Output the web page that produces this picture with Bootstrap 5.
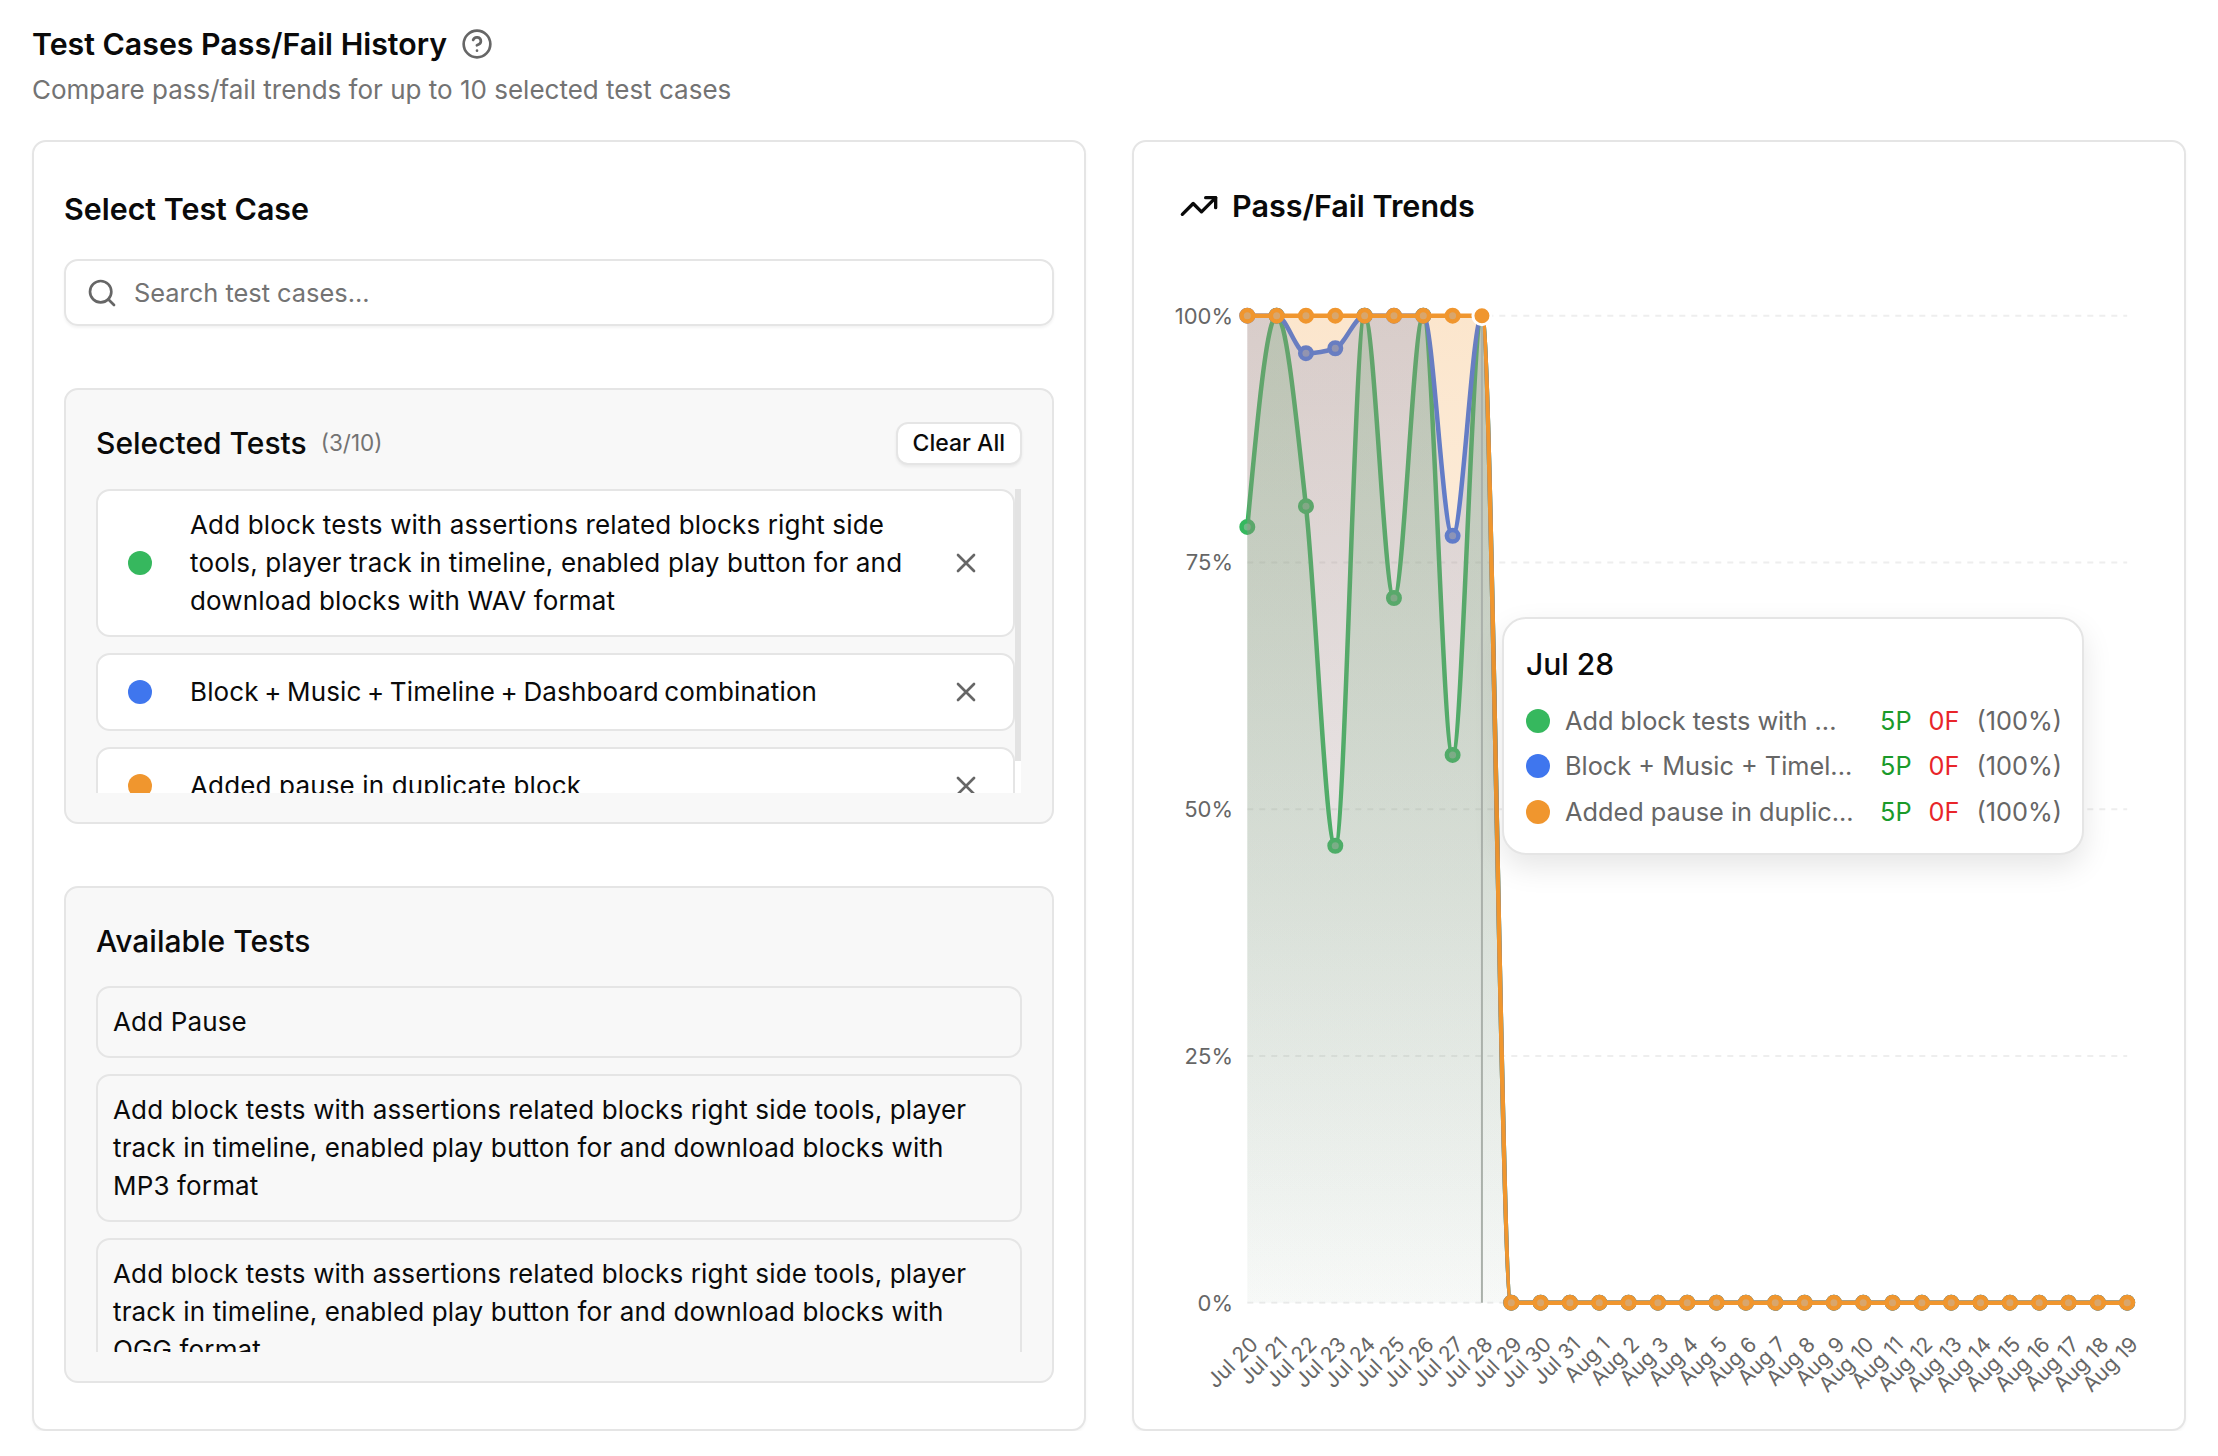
<!DOCTYPE html>
<html lang="en">
<head>
  <meta charset="UTF-8">
  <meta name="viewport" content="width=device-width, initial-scale=1">
  <title>Test Cases Pass/Fail History</title>
  <link href="https://cdn.jsdelivr.net/npm/bootstrap@5.3.0/dist/css/bootstrap.min.css" rel="stylesheet">
  <style>
    body { font-family: Inter, "Liberation Sans", sans-serif; color: #0a0a0a; background: #fff; }
    .page-wrap { padding: 22px 32px 0; }
    .page-title { font-size: 30.3px; line-height: 44px; font-weight: 600; margin: 0; }
    .page-sub { font-size: 26px; line-height: 36px; color: #737373; margin: 6px 0 0; }
    .help-ico { width: 32px; height: 32px; margin-left: 14px; color: #666; }
    .cols { --bs-gutter-x: 46px; margin-top: 32px; }
    .box { border: 2px solid #e5e5e5; border-radius: 14px; height: 1291px; box-shadow: 0 2px 3px rgba(0,0,0,.04); background: #fff; }
    .box-left { padding: 47px 30px 0; }
    .box-title { font-size: 30.4px; line-height: 40px; font-weight: 600; margin: 0 0 30px; }
    .search-box { height: 67px; border: 2px solid #e5e5e5; border-radius: 14px; padding: 0 20px; margin-bottom: 62px; box-shadow: 0 2px 3px rgba(0,0,0,.05); }
    .search-box input { border: 0; outline: 0; padding: 2px 0 0; background: transparent; font-size: 25.4px; width: 100%; color: #0a0a0a; }
    .search-box input::placeholder { color: #737373; opacity: 1; }
    .panel-box { background: #f8f8f8; border: 2px solid #e5e5e5; border-radius: 14px; padding: 31px 30px 29px; }
    .panel-title { font-size: 30px; line-height: 44px; font-weight: 500; margin: 0; }
    .panel-count { font-size: 22.5px; color: #737373; margin-left: 14px; }
    .clear-btn { --bs-btn-font-size: 23px; --bs-btn-padding-x: 15px; --bs-btn-padding-y: 0; --bs-btn-bg: #fff; --bs-btn-border-color: #e5e5e5; --bs-btn-border-width: 2px; --bs-btn-border-radius: 12px; --bs-btn-font-weight: 500; --bs-btn-color: #0a0a0a; height: 43px; box-shadow: 0 2px 3px rgba(0,0,0,.06); }
    .sel-scroll { height: 304px; margin-top: 24px; }
    .sel-list { width: 919px; overflow: hidden; }
    .scroll-track { width: 6px; background: #fff; }
    .scroll-thumb { height: 272px; background: #e3e3e3; }
    .test-item { border: 2px solid #e5e5e5; border-radius: 14px; padding: 15px 25px 15px 30px; margin-bottom: 16px; font-size: 26px; line-height: 38px; letter-spacing: .15px; }
    .test-item.sel { background: #fff; }
    .test-item.avail { padding: 15px 24px 15px 15px; }
    .color-dot { flex: 0 0 24px; width: 24px; height: 24px; border-radius: 50%; }
    .sel-text { flex: 1 1 0; margin: 0 6px 0 38px; min-width: 0; }
    .sel-tight { word-spacing: -2px; }
    .x-btn { flex: 0 0 44px; width: 44px; height: 44px; color: #666; }
    .avail-title { margin-bottom: 23px; }
    .avail-scroll { height: 366px; overflow: hidden; }
    .box-right { position: relative; padding-top: 0; }
    .trend-head { padding: 44px 0 0 45px; height: 118px; font-size: 30.5px; line-height: 40px; font-weight: 600; }
    .trend-head svg { margin-right: 13px; width: 40px; height: 40px; }
    .chart-svg { display: block; }
    .chart-svg text { font-family: Inter, "Liberation Sans", sans-serif; font-size: 22px; fill: #666; }
    .chart-svg text.tick-x { font-size: 21px; }
    .tip-box { position: absolute; left: 368px; top: 475px; width: 582px; height: 238px; background: #fff; border: 2px solid #e5e5e5; border-radius: 24px; box-shadow: 0 12px 30px rgba(0,0,0,.1); padding: 25px 20px 0 22px; }
    .tip-date { font-size: 30px; line-height: 40px; font-weight: 500; margin-bottom: 14px; }
    .tip-row { font-size: 25.3px; line-height: 36px; height: 45.5px; color: #666; }
    .tip-name { flex: 1 1 0; margin-left: 15px; white-space: nowrap; }
    .tip-num { margin-left: 17px; }
    .tip-pass { color: #1a9a2a; }
    .tip-fail { color: #e8252a; }
  </style>
</head>
<body>

<div class="page-wrap">
  <div class="d-flex align-items-center">
    <h1 class="page-title">Test Cases Pass/Fail History</h1>
    <svg class="help-ico" viewBox="0 0 24 24" fill="none" stroke="currentColor" stroke-width="2" stroke-linecap="round" stroke-linejoin="round"><circle cx="12" cy="12" r="10"/><path d="M9.09 9a3 3 0 0 1 5.83 1c0 2-3 3-3 3"/><path d="M12 17h.01"/></svg>
  </div>
  <p class="page-sub">Compare pass/fail trends for up to 10 selected test cases</p>

  <div class="row cols">
    <div class="col-6">
      <div class="box box-left">
        <h2 class="box-title">Select Test Case</h2>
        <div class="search-box d-flex align-items-center gap-3">
          <svg width="32" height="32" class="flex-shrink-0" viewBox="0 0 24 24" fill="none" stroke="#666" stroke-width="2" stroke-linecap="round" stroke-linejoin="round"><circle cx="11" cy="11" r="8"/><path d="m21 21-4.3-4.3"/></svg>
          <input type="text" placeholder="Search test cases...">
        </div>

        <div class="panel-box mb-0">
          <div class="d-flex align-items-center justify-content-between">
            <div class="d-flex align-items-center">
              <h3 class="panel-title">Selected Tests</h3>
              <span class="panel-count">(3/10)</span>
            </div>
            <button type="button" class="btn clear-btn">Clear All</button>
          </div>
          <div class="sel-scroll d-flex">
            <div class="sel-list">
              <div class="test-item sel d-flex align-items-center">
                <span class="color-dot" style="background:#36b85e"></span>
                <span class="sel-text">Add block tests with assertions related blocks right side tools, player track in timeline, enabled play button for and download blocks with WAV format</span>
                <span class="x-btn d-flex align-items-center justify-content-center"><svg width="32" height="32" viewBox="0 0 24 24" fill="none" stroke="currentColor" stroke-width="2" stroke-linecap="round"><path d="M18 6 6 18M6 6l12 12"/></svg></span>
              </div>
              <div class="test-item sel d-flex align-items-center">
                <span class="color-dot" style="background:#3f76ee"></span>
                <span class="sel-text sel-tight">Block + Music + Timeline + Dashboard combination</span>
                <span class="x-btn d-flex align-items-center justify-content-center"><svg width="32" height="32" viewBox="0 0 24 24" fill="none" stroke="currentColor" stroke-width="2" stroke-linecap="round"><path d="M18 6 6 18M6 6l12 12"/></svg></span>
              </div>
              <div class="test-item sel d-flex align-items-center">
                <span class="color-dot" style="background:#f0962e"></span>
                <span class="sel-text">Added pause in duplicate block</span>
                <span class="x-btn d-flex align-items-center justify-content-center"><svg width="32" height="32" viewBox="0 0 24 24" fill="none" stroke="currentColor" stroke-width="2" stroke-linecap="round"><path d="M18 6 6 18M6 6l12 12"/></svg></span>
              </div>
            </div>
            <div class="scroll-track"><div class="scroll-thumb"></div></div>
          </div>
        </div>

        <div class="panel-box" style="margin-top:62px">
          <h3 class="panel-title avail-title">Available Tests</h3>
          <div class="avail-scroll">
            <div class="test-item avail">Add Pause</div>
            <div class="test-item avail">Add block tests with assertions related blocks right side tools, player track in timeline, enabled play button for and download blocks with MP3 format</div>
            <div class="test-item avail">Add block tests with assertions related blocks right side tools, player track in timeline, enabled play button for and download blocks with OGG format</div>
          </div>
        </div>
      </div>
    </div>

    <div class="col-6">
      <div class="box box-right">
        <div class="trend-head d-flex align-items-start">
          <svg viewBox="0 0 24 24" fill="none" stroke="#0a0a0a" stroke-width="2" stroke-linecap="round" stroke-linejoin="round"><path d="M22 7l-8.5 8.5-5-5L2 17"/><path d="M16 7h6v6"/></svg>
          <span>Pass/Fail Trends</span>
        </div>
        <svg id="chart" class="chart-svg" width="1050" height="1168" viewBox="0 0 1050 1168"></svg>
        <div class="tip-box">
          <div class="tip-date">Jul 28</div>
          <div class="tip-row d-flex align-items-center"><span class="color-dot" style="background:#36b85e"></span><span class="tip-name">Add block tests with ...</span><span class="tip-pass">5P</span><span class="tip-fail tip-num">0F</span><span class="tip-num">(100%)</span></div>
          <div class="tip-row d-flex align-items-center"><span class="color-dot" style="background:#3f76ee"></span><span class="tip-name">Block + Music + Timel...</span><span class="tip-pass">5P</span><span class="tip-fail tip-num">0F</span><span class="tip-num">(100%)</span></div>
          <div class="tip-row d-flex align-items-center"><span class="color-dot" style="background:#f0962e"></span><span class="tip-name">Added pause in duplic...</span><span class="tip-pass">5P</span><span class="tip-fail tip-num">0F</span><span class="tip-num">(100%)</span></div>
        </div>
      </div>
    </div>
  </div>
</div>

<script src="https://cdn.jsdelivr.net/npm/bootstrap@5.3.0/dist/js/bootstrap.bundle.min.js"></script>
<script>
  // chart geometry, svg sits at page (1134, 260)
  const x0 = 113.3, stepX = 29.33, yTop = 55.7, yBottom = 1042.7;
  const px = i => x0 + i * stepX;
  const py = v => yBottom - (yBottom - yTop) * v / 100;

  const labels = [];
  for (let d = 20; d <= 31; d++) labels.push("Jul " + d);
  for (let d = 1; d <= 19; d++) labels.push("Aug " + d);

  const tail = new Array(22).fill(0);
  const series = [
    { color: "#36b85e", id: "gGreen", vals: [78.6, 100, 80.7, 46.3, 100, 71.4, 100, 55.5, 100].concat(tail) },
    { color: "#3f76ee", id: "gBlue", vals: [100, 100, 96.2, 96.7, 100, 100, 100, 77.7, 100].concat(tail) },
    { color: "#f0962e", id: "gOrange", vals: [100, 100, 100, 100, 100, 100, 100, 100, 100].concat(tail) }
  ];

  // same as d3 curveMonotoneX
  function monotone(pts) {
    const n = pts.length, t = new Array(n).fill(0);
    const sign = v => v < 0 ? -1 : 1;
    for (let i = 1; i < n - 1; i++) {
      const h0 = pts[i][0] - pts[i-1][0], h1 = pts[i+1][0] - pts[i][0];
      const s0 = (pts[i][1] - pts[i-1][1]) / h0, s1 = (pts[i+1][1] - pts[i][1]) / h1;
      const p = (s0 * h1 + s1 * h0) / (h0 + h1);
      t[i] = (sign(s0) + sign(s1)) * Math.min(Math.abs(s0), Math.abs(s1), 0.5 * Math.abs(p)) || 0;
    }
    const h = pts[1][0] - pts[0][0];
    t[0] = (3 * (pts[1][1] - pts[0][1]) / h - t[1]) / 2;
    t[n-1] = (3 * (pts[n-1][1] - pts[n-2][1]) / h - t[n-2]) / 2;
    let d = "M" + pts[0][0] + "," + pts[0][1];
    for (let i = 0; i < n - 1; i++) {
      const dx = (pts[i+1][0] - pts[i][0]) / 3;
      d += "C" + (pts[i][0] + dx) + "," + (pts[i][1] + dx * t[i]) + "," + (pts[i+1][0] - dx) + "," + (pts[i+1][1] - dx * t[i+1]) + "," + pts[i+1][0] + "," + pts[i+1][1];
    }
    return d;
  }

  let html = "<defs>";
  series.forEach(s => {
    html += `<linearGradient id="${s.id}" gradientUnits="userSpaceOnUse" x1="0" y1="${yTop}" x2="0" y2="${yBottom}"><stop offset="0" stop-color="${s.color}" stop-opacity="0.24"/><stop offset="1" stop-color="${s.color}" stop-opacity="0.02"/></linearGradient>`;
  });
  html += "</defs>";

  // grid and y axis
  [0, 25, 50, 75, 100].forEach(v => {
    html += `<line x1="${x0}" x2="${px(30)}" y1="${py(v)}" y2="${py(v)}" stroke="#eee" stroke-width="2" stroke-dasharray="6 6"/>`;
    html += `<text x="99" y="${py(v) + 8}" text-anchor="end">${v}%</text>`;
  });
  // x axis
  labels.forEach((l, i) => {
    const tx = px(i) + 12, ty = yBottom + 43;
    html += `<text class="tick-x" x="${tx}" y="${ty}" text-anchor="end" transform="rotate(-45 ${tx} ${ty})">${l}</text>`;
  });

  series.forEach(s => {
    const pts = s.vals.map((v, i) => [px(i), py(v)]);
    const line = monotone(pts);
    html += `<path d="${line}L${px(30)},${yBottom}L${x0},${yBottom}Z" fill="url(#${s.id})"/>`;
    html += `<path d="${line}" fill="none" stroke="${s.color}" stroke-width="4.5"/>`;
    pts.forEach(p => {
      html += `<circle cx="${p[0]}" cy="${p[1]}" r="6.5" fill="${s.color}" stroke="${s.color}" stroke-width="3"/>`;
      html += `<circle cx="${p[0]}" cy="${p[1]}" r="3.5" fill="#bbb" fill-opacity=".45"/>`;
    });
  });

  // hover cursor and active dot for Jul 28
  html += `<line x1="${px(8)}" x2="${px(8)}" y1="${yTop}" y2="${yBottom}" stroke="#aab0aa" stroke-width="2"/>`;
  html += `<circle cx="${px(8)}" cy="${yTop}" r="9" fill="#f0962e" stroke="#fff" stroke-width="3"/>`;

  document.getElementById("chart").innerHTML = html;
</script>

</body>
</html>
